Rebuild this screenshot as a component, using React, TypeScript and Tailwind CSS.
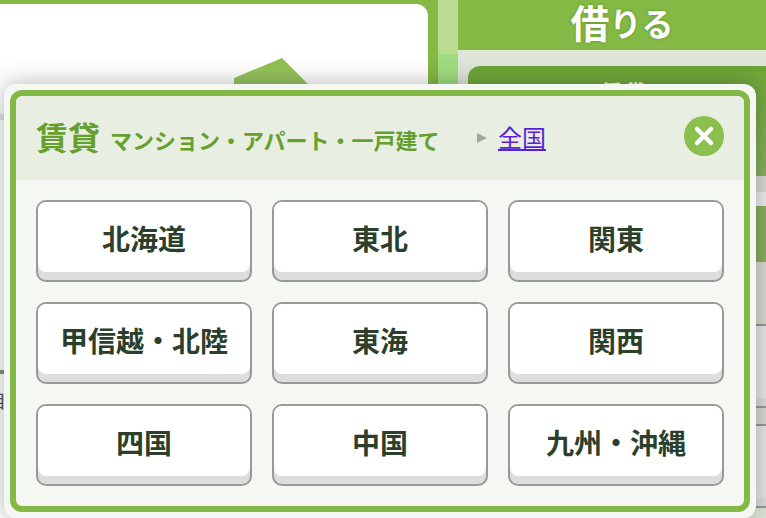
const cjk = "font-['Liberation_Sans','Noto_Sans_CJK_JP',sans-serif]";

const areas = ['北海道', '東北', '関東', '甲信越・北陸', '東海', '関西', '四国', '中国', '九州・沖縄'];

const AreaButton = ({ label }: { label: string }) => (
  <button className="flex h-[82px] flex-col overflow-hidden rounded-[10px] border-2 border-[#999] bg-[#ddd]">
    <span className="flex h-[70px] w-full items-center justify-center rounded-b-[8px] bg-white pt-2 text-[28px] font-bold text-[#2b3f2b]">
      {label}
    </span>
  </button>
);

export default function App() {
  return (
    <div className={`relative h-[518px] w-[766px] overflow-hidden bg-[#f4f6f0] ${cjk}`}>
      {/* page behind the dialog */}
      <div className="flex h-full">
        <div className="w-[438px] bg-[#84b945] pt-1 pr-[10px]">
          <div className="relative h-full overflow-hidden rounded-tr-[12px] bg-white">
            <svg className="absolute left-[234px] top-[54px]" width="80" height="40" viewBox="0 0 80 40">
              <defs>
                <linearGradient id="roof" x1="0" y1="0" x2="0" y2="1">
                  <stop offset="0" stopColor="#8dc04a" />
                  <stop offset="1" stopColor="#a3c878" />
                </linearGradient>
              </defs>
              <polygon points="0,20 48,0 78,30 78,40 0,40" fill="url(#roof)" />
            </svg>
            <div className="mt-[110px] h-[6px] bg-[#e2e4dc]" />
            <div className="mt-[250px] h-1 bg-[#6f9d6f]" />
            <div className="mt-[19px] -ml-3 text-[18px] leading-[19px] text-[#555]">目</div>
          </div>
        </div>
        <div className="flex w-5 flex-col">
          <div className="h-[54px] bg-[#b8dc90]" />
          <div className="h-[40px] bg-[#a0dc80]" />
        </div>
        <div className="flex-1 bg-[#e0e5da]">
          <div className="flex h-[50px] items-center justify-center bg-[#84b945] pl-5 text-[39px] font-bold text-white [text-shadow:0_0_3px_#5b8f2a]">
            借<span className="text-[32px]">りる</span>
          </div>
          <div className="ml-[10px] mt-4 h-[110px] rounded-tl-[12px] border-t-[5px] border-[#6aa536] bg-gradient-to-b from-[#70a83a] to-[#8ab060] pl-3 pt-[6px] text-center text-[24px] leading-[36px] font-bold text-white">
            賃貸
          </div>
          <div className="h-4 bg-[#d8dbd2]" />
          <div className="h-[14px] bg-[#eeeeee]" />
          <div className="h-[56px] bg-[#8ab060]" />
          <div className="h-[64px] border-b-2 border-[#999] bg-[#d8dbd2]" />
          <div className="h-[72px] bg-[#e8e8e8]" />
          <div className="h-[10px] border-b-2 border-[#999] bg-[#dddddd]" />
          <div className="h-[18px] border-b-2 border-[#999] bg-[#d8dbd2]" />
          <div className="h-[72px] bg-[#e8e8e8]" />
          <div className="h-[10px] border-b-2 border-[#999] bg-[#dddddd]" />
        </div>
      </div>

      {/* dialog */}
      <div className="absolute left-1 top-[84px] h-[434px] w-[752px] rounded-[12px] bg-[#f5f7f2] p-[6px] shadow-[0_0_24px_rgba(0,0,0,0.3)]">
        <div className="h-[422px] w-[740px] rounded-[12px] border-[6px] border-[#84b945]">
          <div className="flex h-[84px] items-center rounded-t-[8px] bg-[#e8eee2] px-5">
            <span className="mt-[2px] w-[64px] text-[32px] font-bold text-[#66a02c]">賃貸</span>
            <span className="ml-[10px] mt-[6px] w-[367px] text-[22px] font-bold whitespace-nowrap text-[#66a02c]">マンション・アパート・一戸建て</span>
            <span className="h-0 w-0 border-y-[5px] border-l-[10px] border-y-transparent border-l-[#a3a3a3]" />
            <a href="#" className="ml-[11px] mt-[1px] text-[24px] text-[#5a1fd9] underline">全国</a>
            <button className="ml-auto mb-1 flex size-10 items-center justify-center rounded-full bg-[#8bbf4e]">
              <svg width="24" height="24" viewBox="0 0 24 24" stroke="white" strokeWidth="4.5" strokeLinecap="round">
                <path d="M5 5 19 19M19 5 5 19" />
              </svg>
            </button>
          </div>
          <div className="grid grid-cols-3 gap-5 px-5 pt-5">
            {areas.map((a) => (
              <AreaButton key={a} label={a} />
            ))}
          </div>
        </div>
      </div>
    </div>
  );
}
